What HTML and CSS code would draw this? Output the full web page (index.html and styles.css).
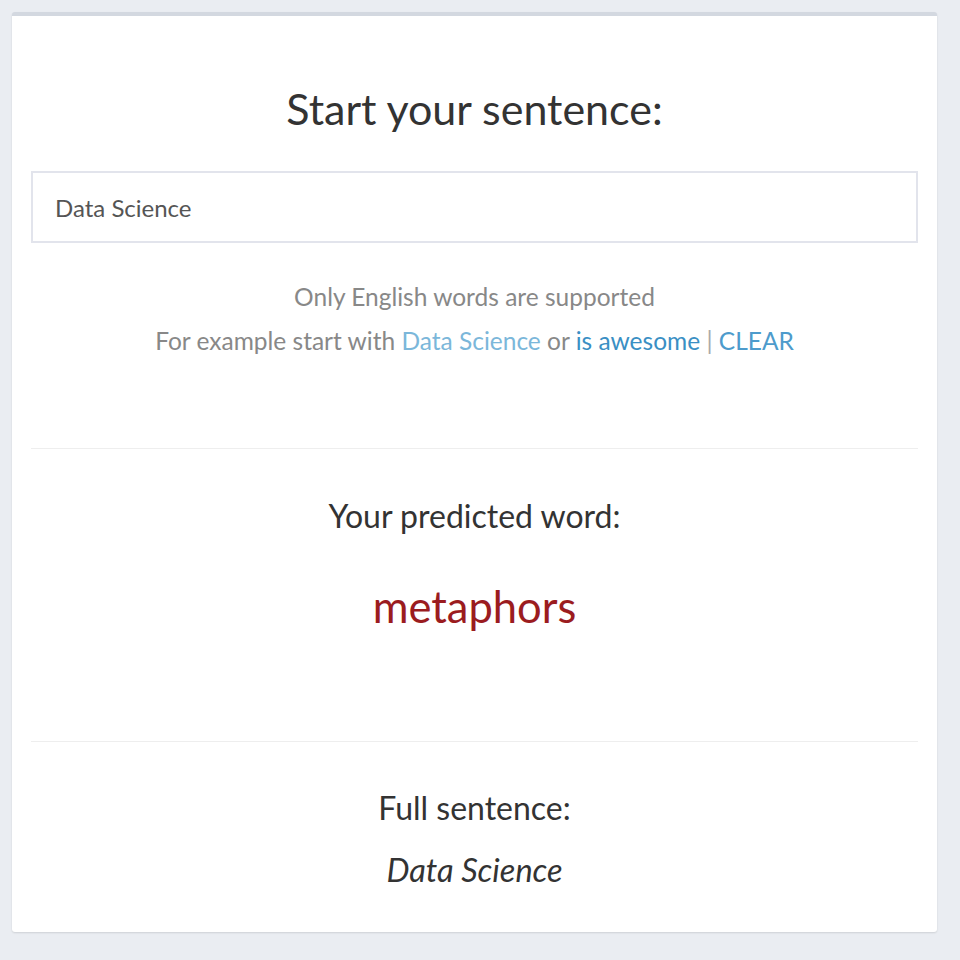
FILE: index.html
```html
<!DOCTYPE html>
<html lang="en">
<head>
<meta charset="utf-8">
<title>Next word prediction</title>
<link rel="stylesheet" href="styles.css">
</head>
<body>
<main class="card">
  <h1 class="title">Start your sentence:</h1>
  <input class="sentence-input" type="text" value="Data Science">
  <div class="help">
    <p class="help-line">Only English words are supported</p>
    <p class="help-line">For example start with <a class="ex-light" href="#">Data Science</a> or <a class="ex-dark" href="#">is awesome</a> <span class="sep">|</span> <a class="clear" href="#">CLEAR</a></p>
  </div>
  <hr class="divider divider-top">
  <section class="prediction">
    <h2 class="subtitle">Your predicted word:</h2>
    <p class="predicted">metaphors</p>
  </section>
  <hr class="divider divider-bottom">
  <section class="full">
    <h2 class="subtitle">Full sentence:</h2>
    <p class="full-text">Data Science</p>
  </section>
</main>
</body>
</html>
```

FILE: styles.css
```css
html, body {
  margin: 0;
  padding: 0;
}
body {
  background: #eaedf2;
  font-family: Lato, "Open Sans", sans-serif;
  color: #333;
  padding: 12px 23px 28px 12px;
}
.card {
  display: flex;
  flex-direction: column;
  align-items: stretch;
  background: #fff;
  border-top: 4px solid #d3d8e0;
  border-radius: 3px;
  box-shadow: 0 1px 2px rgba(0, 0, 0, 0.12);
  padding: 0 19px;
  box-sizing: border-box;
  height: 920px;
}
.title {
  margin: 65px 0 0;
  text-align: center;
  font-weight: 400;
  font-size: 43px;
  line-height: 56px;
  color: #333;
}
.sentence-input {
  margin-top: 34px;
  height: 72px;
  box-sizing: border-box;
  border: 2px solid #e2e4ec;
  padding: 0 22px;
  font-family: inherit;
  font-size: 24px;
  color: #555;
  outline: none;
}
.help {
  margin-top: 32px;
  text-align: center;
  font-size: 24.5px;
  color: #888;
}
.help-line {
  margin: 0;
  line-height: 44px;
}
.help a {
  text-decoration: none;
}
.ex-light { color: #7bb7da; }
.ex-dark { color: #3a8fc4; }
.clear { color: #4d9bcc; }
.sep { color: #aaa; }
.divider {
  border: 0;
  border-top: 1px solid #eee;
  margin: 0;
}
.divider-top { margin-top: 85px; }
.prediction, .full {
  text-align: center;
}
.subtitle {
  margin: 0;
  font-weight: 400;
  font-size: 32px;
  line-height: 40px;
  color: #333;
}
.prediction .subtitle { margin-top: 47px; }
.predicted {
  margin: 44px 0 0;
  font-size: 43.5px;
  line-height: 52px;
  color: #9b1c1f;
}
.divider-bottom { margin-top: 109px; }
.full .subtitle { margin-top: 46px; }
.full-text {
  margin: 22px 0 0;
  font-size: 32.5px;
  line-height: 40px;
  font-style: italic;
  color: #333;
}
```
